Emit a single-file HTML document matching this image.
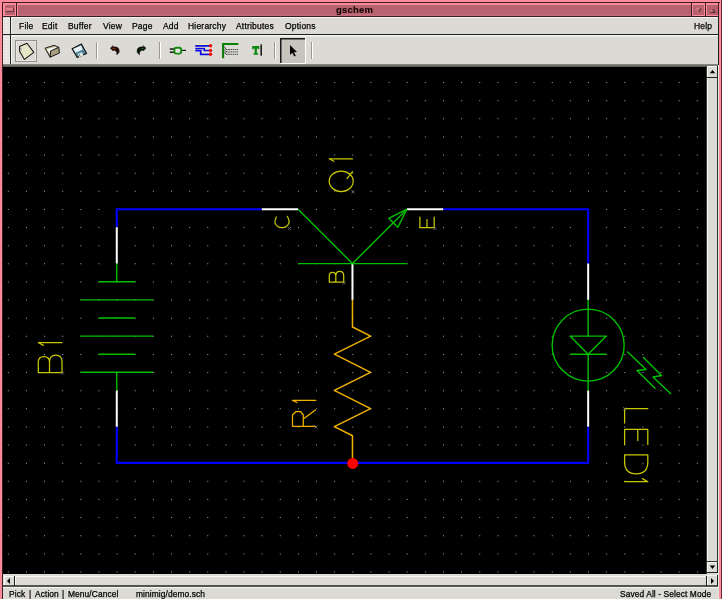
<!DOCTYPE html>
<html><head><meta charset="utf-8"><title>gschem</title><style>
*{margin:0;padding:0;box-sizing:border-box}
html,body{width:722px;height:599px;overflow:hidden;background:#ff8a9a;font-family:"Liberation Sans",sans-serif}
.a{position:absolute}
.t{position:absolute;white-space:nowrap;color:#000;font-size:8.5px;letter-spacing:0.2px;line-height:10px;will-change:transform;-webkit-text-stroke:0.25px #000}
</style></head>
<body>
<div class="a" style="left:2px;top:2px;width:718px;height:1px;background:#3c1c24;"></div><div class="a" style="left:2px;top:2px;width:1px;height:597px;background:#3c1c24;"></div><div class="a" style="left:721px;top:0px;width:1px;height:599px;background:#5c2c36;"></div><div class="a" style="left:3px;top:3px;width:716px;height:13px;background:#ff8a9a;"></div><div class="a" style="left:5px;top:5px;width:10px;height:10px;background:#b8626f;"></div><div class="a" style="left:16px;top:3px;width:1px;height:14px;background:#3c1c24;"></div><div class="a" style="left:6px;top:8px;width:7px;height:3px;background:#d47888;"></div><div class="a" style="left:6px;top:8px;width:7px;height:1px;background:#e8808f;"></div><div class="a" style="left:6px;top:11px;width:8px;height:1px;background:#6c3440;"></div><div class="a" style="left:13px;top:8px;width:1px;height:4px;background:#6c3440;"></div><div class="a" style="left:18px;top:5px;width:673px;height:10px;background:#b8626f;"></div><div class="a" style="left:18px;top:14px;width:673px;height:2px;background:#c26a7a;"></div><div class="a" style="left:3px;top:16px;width:716px;height:1px;background:#3c1c24;"></div><div class="a" style="left:691px;top:3px;width:1px;height:13px;background:#3c1c24;"></div><div class="a" style="left:693px;top:5px;width:11px;height:10px;background:#b8626f;"></div><div class="a" style="left:705px;top:3px;width:1px;height:13px;background:#3c1c24;"></div><div class="a" style="left:707px;top:5px;width:11px;height:10px;background:#b8626f;"></div><div class="a" style="left:718px;top:2px;width:1px;height:15px;background:#3c1c24;"></div><div class="t" style="left:335.5px;top:4.5px;font-weight:bold;font-size:9.5px;color:#100404;-webkit-text-stroke:0.1px #100404;transform:none">gschem</div><div class="a" style="left:3px;top:17px;width:716px;height:582px;background:#dcdad5;"></div><div class="a" style="left:718px;top:17px;width:1px;height:582px;background:#e8e8e4;"></div><div class="a" style="left:718px;top:17px;width:1px;height:48px;background:#202020;"></div><div class="a" style="left:3px;top:18px;width:7px;height:16px;background:#ecebe7;background-image:radial-gradient(circle,#bdbcb6 0.7px,transparent 0.9px);background-size:3px 3px;background-position:0.5px 0.5px"></div><div class="a" style="left:10px;top:17px;width:1px;height:18px;background:#202020;"></div><div class="a" style="left:11px;top:17px;width:707px;height:1px;background:#f4f4f0;"></div><div class="a" style="left:11px;top:17px;width:1px;height:17px;background:#f4f4f0;"></div><div class="a" style="left:3px;top:34px;width:715px;height:1px;background:#202020;"></div><div class="t" style="left:18.5px;top:21.3px;">File</div><div class="t" style="left:42px;top:21.3px;">Edit</div><div class="t" style="left:68px;top:21.3px;">Buffer</div><div class="t" style="left:102.5px;top:21.3px;">View</div><div class="t" style="left:132px;top:21.3px;">Page</div><div class="t" style="left:162.5px;top:21.3px;">Add</div><div class="t" style="left:188px;top:21.3px;">Hierarchy</div><div class="t" style="left:235.5px;top:21.3px;">Attributes</div><div class="t" style="left:284.5px;top:21.3px;">Options</div><div class="t" style="left:694px;top:21.3px;">Help</div><div class="a" style="left:3px;top:36px;width:7px;height:28px;background:#ecebe7;background-image:radial-gradient(circle,#bdbcb6 0.7px,transparent 0.9px);background-size:3px 3px;background-position:0.5px 0.5px"></div><div class="a" style="left:10px;top:35px;width:1px;height:30px;background:#202020;"></div><div class="a" style="left:11px;top:35px;width:707px;height:1px;background:#f6f6f2;"></div><div class="a" style="left:11px;top:36px;width:707px;height:1px;background:#e8e7e3;"></div><div class="a" style="left:11px;top:35px;width:1px;height:29px;background:#f4f4f0;"></div><div class="a" style="left:3px;top:64px;width:715px;height:1px;background:#86857e;"></div><div class="a" style="left:3px;top:65px;width:715px;height:1px;background:#74736c;"></div><div class="a" style="left:3px;top:66px;width:703px;height:1px;background:#5e5e58;"></div><div class="a" style="left:3px;top:67px;width:703px;height:507px;background:#000;"></div><div class="a" style="left:706px;top:66px;width:12px;height:508px;background:#dcdad5;"></div><div class="a" style="left:706px;top:66px;width:1px;height:508px;background:#3a3a36;"></div><div class="a" style="left:707px;top:66px;width:10px;height:1px;background:#f8f8f4;"></div><div class="a" style="left:707px;top:66px;width:1px;height:11px;background:#f8f8f4;"></div><div class="a" style="left:707px;top:77px;width:11px;height:1px;background:#202020;"></div><div class="a" style="left:717px;top:66px;width:1px;height:12px;background:#202020;"></div><div class="a" style="left:707px;top:78px;width:1px;height:484px;background:#f8f8f4;"></div><div class="a" style="left:717px;top:78px;width:1px;height:484px;background:#303030;"></div><div class="a" style="left:707px;top:561px;width:11px;height:1px;background:#303030;"></div><div class="a" style="left:707px;top:562px;width:10px;height:1px;background:#f8f8f4;"></div><div class="a" style="left:707px;top:562px;width:1px;height:11px;background:#f8f8f4;"></div><div class="a" style="left:707px;top:572px;width:11px;height:1px;background:#202020;"></div><div class="a" style="left:717px;top:562px;width:1px;height:11px;background:#202020;"></div><div class="a" style="left:3px;top:574px;width:715px;height:13px;background:#dcdad5;"></div><div class="a" style="left:3px;top:585px;width:715px;height:2px;background:#555550;"></div><div class="a" style="left:4px;top:576px;width:1px;height:9px;background:#f8f8f4;"></div><div class="a" style="left:4px;top:576px;width:10px;height:1px;background:#f8f8f4;"></div><div class="a" style="left:14px;top:576px;width:1px;height:10px;background:#202020;"></div><div class="a" style="left:15px;top:576px;width:1px;height:9px;background:#f8f8f4;"></div><div class="a" style="left:15px;top:576px;width:691px;height:1px;background:#f8f8f4;"></div><div class="a" style="left:706px;top:576px;width:1px;height:10px;background:#202020;"></div><div class="a" style="left:707px;top:575px;width:1px;height:10px;background:#f8f8f4;"></div><div class="a" style="left:707px;top:575px;width:10px;height:1px;background:#f8f8f4;"></div><div class="a" style="left:717px;top:575px;width:1px;height:11px;background:#202020;"></div><div class="a" style="left:3px;top:587px;width:715px;height:1px;background:#f4f4f0;"></div><div class="t" style="left:9px;top:589px;font-size:8.4px;letter-spacing:0.1px">Pick</div><div class="t" style="left:28.8px;top:589px;font-size:8.4px;letter-spacing:0.1px">|</div><div class="t" style="left:34.5px;top:589px;font-size:8.4px;letter-spacing:0.1px">Action</div><div class="t" style="left:62px;top:589px;font-size:8.4px;letter-spacing:0.1px">|</div><div class="t" style="left:68.3px;top:589px;font-size:8.4px;letter-spacing:0.1px">Menu/Cancel</div><div class="t" style="left:135.8px;top:589px;font-size:8.4px;letter-spacing:0.1px">minimig/demo.sch</div><div class="t" style="left:620.3px;top:589px;font-size:8.4px;letter-spacing:0.1px">Saved All - Select Mode</div>
<svg class="a" style="left:0;top:0" width="722" height="599" viewBox="0 0 722 599"><defs><clipPath id="cv"><rect x="3" y="67" width="703" height="507"/></clipPath></defs><g clip-path="url(#cv)"><path d="M7.8 82h1v1h-1zM7.8 100.13h1v1h-1zM7.8 118.26h1v1h-1zM7.8 136.39h1v1h-1zM7.8 154.52h1v1h-1zM7.8 172.65h1v1h-1zM7.8 190.78h1v1h-1zM7.8 208.91h1v1h-1zM7.8 227.04h1v1h-1zM7.8 245.17h1v1h-1zM7.8 263.3h1v1h-1zM7.8 281.43h1v1h-1zM7.8 299.56h1v1h-1zM7.8 317.69h1v1h-1zM7.8 335.82h1v1h-1zM7.8 353.95h1v1h-1zM7.8 372.08h1v1h-1zM7.8 390.21h1v1h-1zM7.8 408.34h1v1h-1zM7.8 426.47h1v1h-1zM7.8 444.6h1v1h-1zM7.8 462.73h1v1h-1zM7.8 480.86h1v1h-1zM7.8 498.99h1v1h-1zM7.8 517.12h1v1h-1zM7.8 535.25h1v1h-1zM7.8 553.38h1v1h-1zM7.8 571.51h1v1h-1zM25.93 82h1v1h-1zM25.93 100.13h1v1h-1zM25.93 118.26h1v1h-1zM25.93 136.39h1v1h-1zM25.93 154.52h1v1h-1zM25.93 172.65h1v1h-1zM25.93 190.78h1v1h-1zM25.93 208.91h1v1h-1zM25.93 227.04h1v1h-1zM25.93 245.17h1v1h-1zM25.93 263.3h1v1h-1zM25.93 281.43h1v1h-1zM25.93 299.56h1v1h-1zM25.93 317.69h1v1h-1zM25.93 335.82h1v1h-1zM25.93 353.95h1v1h-1zM25.93 372.08h1v1h-1zM25.93 390.21h1v1h-1zM25.93 408.34h1v1h-1zM25.93 426.47h1v1h-1zM25.93 444.6h1v1h-1zM25.93 462.73h1v1h-1zM25.93 480.86h1v1h-1zM25.93 498.99h1v1h-1zM25.93 517.12h1v1h-1zM25.93 535.25h1v1h-1zM25.93 553.38h1v1h-1zM25.93 571.51h1v1h-1zM44.06 82h1v1h-1zM44.06 100.13h1v1h-1zM44.06 118.26h1v1h-1zM44.06 136.39h1v1h-1zM44.06 154.52h1v1h-1zM44.06 172.65h1v1h-1zM44.06 190.78h1v1h-1zM44.06 208.91h1v1h-1zM44.06 227.04h1v1h-1zM44.06 245.17h1v1h-1zM44.06 263.3h1v1h-1zM44.06 281.43h1v1h-1zM44.06 299.56h1v1h-1zM44.06 317.69h1v1h-1zM44.06 335.82h1v1h-1zM44.06 353.95h1v1h-1zM44.06 372.08h1v1h-1zM44.06 390.21h1v1h-1zM44.06 408.34h1v1h-1zM44.06 426.47h1v1h-1zM44.06 444.6h1v1h-1zM44.06 462.73h1v1h-1zM44.06 480.86h1v1h-1zM44.06 498.99h1v1h-1zM44.06 517.12h1v1h-1zM44.06 535.25h1v1h-1zM44.06 553.38h1v1h-1zM44.06 571.51h1v1h-1zM62.2 82h1v1h-1zM62.2 100.13h1v1h-1zM62.2 118.26h1v1h-1zM62.2 136.39h1v1h-1zM62.2 154.52h1v1h-1zM62.2 172.65h1v1h-1zM62.2 190.78h1v1h-1zM62.2 208.91h1v1h-1zM62.2 227.04h1v1h-1zM62.2 245.17h1v1h-1zM62.2 263.3h1v1h-1zM62.2 281.43h1v1h-1zM62.2 299.56h1v1h-1zM62.2 317.69h1v1h-1zM62.2 335.82h1v1h-1zM62.2 353.95h1v1h-1zM62.2 372.08h1v1h-1zM62.2 390.21h1v1h-1zM62.2 408.34h1v1h-1zM62.2 426.47h1v1h-1zM62.2 444.6h1v1h-1zM62.2 462.73h1v1h-1zM62.2 480.86h1v1h-1zM62.2 498.99h1v1h-1zM62.2 517.12h1v1h-1zM62.2 535.25h1v1h-1zM62.2 553.38h1v1h-1zM62.2 571.51h1v1h-1zM80.33 82h1v1h-1zM80.33 100.13h1v1h-1zM80.33 118.26h1v1h-1zM80.33 136.39h1v1h-1zM80.33 154.52h1v1h-1zM80.33 172.65h1v1h-1zM80.33 190.78h1v1h-1zM80.33 208.91h1v1h-1zM80.33 227.04h1v1h-1zM80.33 245.17h1v1h-1zM80.33 263.3h1v1h-1zM80.33 281.43h1v1h-1zM80.33 299.56h1v1h-1zM80.33 317.69h1v1h-1zM80.33 335.82h1v1h-1zM80.33 353.95h1v1h-1zM80.33 372.08h1v1h-1zM80.33 390.21h1v1h-1zM80.33 408.34h1v1h-1zM80.33 426.47h1v1h-1zM80.33 444.6h1v1h-1zM80.33 462.73h1v1h-1zM80.33 480.86h1v1h-1zM80.33 498.99h1v1h-1zM80.33 517.12h1v1h-1zM80.33 535.25h1v1h-1zM80.33 553.38h1v1h-1zM80.33 571.51h1v1h-1zM98.46 82h1v1h-1zM98.46 100.13h1v1h-1zM98.46 118.26h1v1h-1zM98.46 136.39h1v1h-1zM98.46 154.52h1v1h-1zM98.46 172.65h1v1h-1zM98.46 190.78h1v1h-1zM98.46 208.91h1v1h-1zM98.46 227.04h1v1h-1zM98.46 245.17h1v1h-1zM98.46 263.3h1v1h-1zM98.46 281.43h1v1h-1zM98.46 299.56h1v1h-1zM98.46 317.69h1v1h-1zM98.46 335.82h1v1h-1zM98.46 353.95h1v1h-1zM98.46 372.08h1v1h-1zM98.46 390.21h1v1h-1zM98.46 408.34h1v1h-1zM98.46 426.47h1v1h-1zM98.46 444.6h1v1h-1zM98.46 462.73h1v1h-1zM98.46 480.86h1v1h-1zM98.46 498.99h1v1h-1zM98.46 517.12h1v1h-1zM98.46 535.25h1v1h-1zM98.46 553.38h1v1h-1zM98.46 571.51h1v1h-1zM116.59 82h1v1h-1zM116.59 100.13h1v1h-1zM116.59 118.26h1v1h-1zM116.59 136.39h1v1h-1zM116.59 154.52h1v1h-1zM116.59 172.65h1v1h-1zM116.59 190.78h1v1h-1zM116.59 208.91h1v1h-1zM116.59 227.04h1v1h-1zM116.59 245.17h1v1h-1zM116.59 263.3h1v1h-1zM116.59 281.43h1v1h-1zM116.59 299.56h1v1h-1zM116.59 317.69h1v1h-1zM116.59 335.82h1v1h-1zM116.59 353.95h1v1h-1zM116.59 372.08h1v1h-1zM116.59 390.21h1v1h-1zM116.59 408.34h1v1h-1zM116.59 426.47h1v1h-1zM116.59 444.6h1v1h-1zM116.59 462.73h1v1h-1zM116.59 480.86h1v1h-1zM116.59 498.99h1v1h-1zM116.59 517.12h1v1h-1zM116.59 535.25h1v1h-1zM116.59 553.38h1v1h-1zM116.59 571.51h1v1h-1zM134.72 82h1v1h-1zM134.72 100.13h1v1h-1zM134.72 118.26h1v1h-1zM134.72 136.39h1v1h-1zM134.72 154.52h1v1h-1zM134.72 172.65h1v1h-1zM134.72 190.78h1v1h-1zM134.72 208.91h1v1h-1zM134.72 227.04h1v1h-1zM134.72 245.17h1v1h-1zM134.72 263.3h1v1h-1zM134.72 281.43h1v1h-1zM134.72 299.56h1v1h-1zM134.72 317.69h1v1h-1zM134.72 335.82h1v1h-1zM134.72 353.95h1v1h-1zM134.72 372.08h1v1h-1zM134.72 390.21h1v1h-1zM134.72 408.34h1v1h-1zM134.72 426.47h1v1h-1zM134.72 444.6h1v1h-1zM134.72 462.73h1v1h-1zM134.72 480.86h1v1h-1zM134.72 498.99h1v1h-1zM134.72 517.12h1v1h-1zM134.72 535.25h1v1h-1zM134.72 553.38h1v1h-1zM134.72 571.51h1v1h-1zM152.86 82h1v1h-1zM152.86 100.13h1v1h-1zM152.86 118.26h1v1h-1zM152.86 136.39h1v1h-1zM152.86 154.52h1v1h-1zM152.86 172.65h1v1h-1zM152.86 190.78h1v1h-1zM152.86 208.91h1v1h-1zM152.86 227.04h1v1h-1zM152.86 245.17h1v1h-1zM152.86 263.3h1v1h-1zM152.86 281.43h1v1h-1zM152.86 299.56h1v1h-1zM152.86 317.69h1v1h-1zM152.86 335.82h1v1h-1zM152.86 353.95h1v1h-1zM152.86 372.08h1v1h-1zM152.86 390.21h1v1h-1zM152.86 408.34h1v1h-1zM152.86 426.47h1v1h-1zM152.86 444.6h1v1h-1zM152.86 462.73h1v1h-1zM152.86 480.86h1v1h-1zM152.86 498.99h1v1h-1zM152.86 517.12h1v1h-1zM152.86 535.25h1v1h-1zM152.86 553.38h1v1h-1zM152.86 571.51h1v1h-1zM170.99 82h1v1h-1zM170.99 100.13h1v1h-1zM170.99 118.26h1v1h-1zM170.99 136.39h1v1h-1zM170.99 154.52h1v1h-1zM170.99 172.65h1v1h-1zM170.99 190.78h1v1h-1zM170.99 208.91h1v1h-1zM170.99 227.04h1v1h-1zM170.99 245.17h1v1h-1zM170.99 263.3h1v1h-1zM170.99 281.43h1v1h-1zM170.99 299.56h1v1h-1zM170.99 317.69h1v1h-1zM170.99 335.82h1v1h-1zM170.99 353.95h1v1h-1zM170.99 372.08h1v1h-1zM170.99 390.21h1v1h-1zM170.99 408.34h1v1h-1zM170.99 426.47h1v1h-1zM170.99 444.6h1v1h-1zM170.99 462.73h1v1h-1zM170.99 480.86h1v1h-1zM170.99 498.99h1v1h-1zM170.99 517.12h1v1h-1zM170.99 535.25h1v1h-1zM170.99 553.38h1v1h-1zM170.99 571.51h1v1h-1zM189.12 82h1v1h-1zM189.12 100.13h1v1h-1zM189.12 118.26h1v1h-1zM189.12 136.39h1v1h-1zM189.12 154.52h1v1h-1zM189.12 172.65h1v1h-1zM189.12 190.78h1v1h-1zM189.12 208.91h1v1h-1zM189.12 227.04h1v1h-1zM189.12 245.17h1v1h-1zM189.12 263.3h1v1h-1zM189.12 281.43h1v1h-1zM189.12 299.56h1v1h-1zM189.12 317.69h1v1h-1zM189.12 335.82h1v1h-1zM189.12 353.95h1v1h-1zM189.12 372.08h1v1h-1zM189.12 390.21h1v1h-1zM189.12 408.34h1v1h-1zM189.12 426.47h1v1h-1zM189.12 444.6h1v1h-1zM189.12 462.73h1v1h-1zM189.12 480.86h1v1h-1zM189.12 498.99h1v1h-1zM189.12 517.12h1v1h-1zM189.12 535.25h1v1h-1zM189.12 553.38h1v1h-1zM189.12 571.51h1v1h-1zM207.25 82h1v1h-1zM207.25 100.13h1v1h-1zM207.25 118.26h1v1h-1zM207.25 136.39h1v1h-1zM207.25 154.52h1v1h-1zM207.25 172.65h1v1h-1zM207.25 190.78h1v1h-1zM207.25 208.91h1v1h-1zM207.25 227.04h1v1h-1zM207.25 245.17h1v1h-1zM207.25 263.3h1v1h-1zM207.25 281.43h1v1h-1zM207.25 299.56h1v1h-1zM207.25 317.69h1v1h-1zM207.25 335.82h1v1h-1zM207.25 353.95h1v1h-1zM207.25 372.08h1v1h-1zM207.25 390.21h1v1h-1zM207.25 408.34h1v1h-1zM207.25 426.47h1v1h-1zM207.25 444.6h1v1h-1zM207.25 462.73h1v1h-1zM207.25 480.86h1v1h-1zM207.25 498.99h1v1h-1zM207.25 517.12h1v1h-1zM207.25 535.25h1v1h-1zM207.25 553.38h1v1h-1zM207.25 571.51h1v1h-1zM225.38 82h1v1h-1zM225.38 100.13h1v1h-1zM225.38 118.26h1v1h-1zM225.38 136.39h1v1h-1zM225.38 154.52h1v1h-1zM225.38 172.65h1v1h-1zM225.38 190.78h1v1h-1zM225.38 208.91h1v1h-1zM225.38 227.04h1v1h-1zM225.38 245.17h1v1h-1zM225.38 263.3h1v1h-1zM225.38 281.43h1v1h-1zM225.38 299.56h1v1h-1zM225.38 317.69h1v1h-1zM225.38 335.82h1v1h-1zM225.38 353.95h1v1h-1zM225.38 372.08h1v1h-1zM225.38 390.21h1v1h-1zM225.38 408.34h1v1h-1zM225.38 426.47h1v1h-1zM225.38 444.6h1v1h-1zM225.38 462.73h1v1h-1zM225.38 480.86h1v1h-1zM225.38 498.99h1v1h-1zM225.38 517.12h1v1h-1zM225.38 535.25h1v1h-1zM225.38 553.38h1v1h-1zM225.38 571.51h1v1h-1zM243.52 82h1v1h-1zM243.52 100.13h1v1h-1zM243.52 118.26h1v1h-1zM243.52 136.39h1v1h-1zM243.52 154.52h1v1h-1zM243.52 172.65h1v1h-1zM243.52 190.78h1v1h-1zM243.52 208.91h1v1h-1zM243.52 227.04h1v1h-1zM243.52 245.17h1v1h-1zM243.52 263.3h1v1h-1zM243.52 281.43h1v1h-1zM243.52 299.56h1v1h-1zM243.52 317.69h1v1h-1zM243.52 335.82h1v1h-1zM243.52 353.95h1v1h-1zM243.52 372.08h1v1h-1zM243.52 390.21h1v1h-1zM243.52 408.34h1v1h-1zM243.52 426.47h1v1h-1zM243.52 444.6h1v1h-1zM243.52 462.73h1v1h-1zM243.52 480.86h1v1h-1zM243.52 498.99h1v1h-1zM243.52 517.12h1v1h-1zM243.52 535.25h1v1h-1zM243.52 553.38h1v1h-1zM243.52 571.51h1v1h-1zM261.65 82h1v1h-1zM261.65 100.13h1v1h-1zM261.65 118.26h1v1h-1zM261.65 136.39h1v1h-1zM261.65 154.52h1v1h-1zM261.65 172.65h1v1h-1zM261.65 190.78h1v1h-1zM261.65 208.91h1v1h-1zM261.65 227.04h1v1h-1zM261.65 245.17h1v1h-1zM261.65 263.3h1v1h-1zM261.65 281.43h1v1h-1zM261.65 299.56h1v1h-1zM261.65 317.69h1v1h-1zM261.65 335.82h1v1h-1zM261.65 353.95h1v1h-1zM261.65 372.08h1v1h-1zM261.65 390.21h1v1h-1zM261.65 408.34h1v1h-1zM261.65 426.47h1v1h-1zM261.65 444.6h1v1h-1zM261.65 462.73h1v1h-1zM261.65 480.86h1v1h-1zM261.65 498.99h1v1h-1zM261.65 517.12h1v1h-1zM261.65 535.25h1v1h-1zM261.65 553.38h1v1h-1zM261.65 571.51h1v1h-1zM279.78 82h1v1h-1zM279.78 100.13h1v1h-1zM279.78 118.26h1v1h-1zM279.78 136.39h1v1h-1zM279.78 154.52h1v1h-1zM279.78 172.65h1v1h-1zM279.78 190.78h1v1h-1zM279.78 208.91h1v1h-1zM279.78 227.04h1v1h-1zM279.78 245.17h1v1h-1zM279.78 263.3h1v1h-1zM279.78 281.43h1v1h-1zM279.78 299.56h1v1h-1zM279.78 317.69h1v1h-1zM279.78 335.82h1v1h-1zM279.78 353.95h1v1h-1zM279.78 372.08h1v1h-1zM279.78 390.21h1v1h-1zM279.78 408.34h1v1h-1zM279.78 426.47h1v1h-1zM279.78 444.6h1v1h-1zM279.78 462.73h1v1h-1zM279.78 480.86h1v1h-1zM279.78 498.99h1v1h-1zM279.78 517.12h1v1h-1zM279.78 535.25h1v1h-1zM279.78 553.38h1v1h-1zM279.78 571.51h1v1h-1zM297.91 82h1v1h-1zM297.91 100.13h1v1h-1zM297.91 118.26h1v1h-1zM297.91 136.39h1v1h-1zM297.91 154.52h1v1h-1zM297.91 172.65h1v1h-1zM297.91 190.78h1v1h-1zM297.91 208.91h1v1h-1zM297.91 227.04h1v1h-1zM297.91 245.17h1v1h-1zM297.91 263.3h1v1h-1zM297.91 281.43h1v1h-1zM297.91 299.56h1v1h-1zM297.91 317.69h1v1h-1zM297.91 335.82h1v1h-1zM297.91 353.95h1v1h-1zM297.91 372.08h1v1h-1zM297.91 390.21h1v1h-1zM297.91 408.34h1v1h-1zM297.91 426.47h1v1h-1zM297.91 444.6h1v1h-1zM297.91 462.73h1v1h-1zM297.91 480.86h1v1h-1zM297.91 498.99h1v1h-1zM297.91 517.12h1v1h-1zM297.91 535.25h1v1h-1zM297.91 553.38h1v1h-1zM297.91 571.51h1v1h-1zM316.04 82h1v1h-1zM316.04 100.13h1v1h-1zM316.04 118.26h1v1h-1zM316.04 136.39h1v1h-1zM316.04 154.52h1v1h-1zM316.04 172.65h1v1h-1zM316.04 190.78h1v1h-1zM316.04 208.91h1v1h-1zM316.04 227.04h1v1h-1zM316.04 245.17h1v1h-1zM316.04 263.3h1v1h-1zM316.04 281.43h1v1h-1zM316.04 299.56h1v1h-1zM316.04 317.69h1v1h-1zM316.04 335.82h1v1h-1zM316.04 353.95h1v1h-1zM316.04 372.08h1v1h-1zM316.04 390.21h1v1h-1zM316.04 408.34h1v1h-1zM316.04 426.47h1v1h-1zM316.04 444.6h1v1h-1zM316.04 462.73h1v1h-1zM316.04 480.86h1v1h-1zM316.04 498.99h1v1h-1zM316.04 517.12h1v1h-1zM316.04 535.25h1v1h-1zM316.04 553.38h1v1h-1zM316.04 571.51h1v1h-1zM334.18 82h1v1h-1zM334.18 100.13h1v1h-1zM334.18 118.26h1v1h-1zM334.18 136.39h1v1h-1zM334.18 154.52h1v1h-1zM334.18 172.65h1v1h-1zM334.18 190.78h1v1h-1zM334.18 208.91h1v1h-1zM334.18 227.04h1v1h-1zM334.18 245.17h1v1h-1zM334.18 263.3h1v1h-1zM334.18 281.43h1v1h-1zM334.18 299.56h1v1h-1zM334.18 317.69h1v1h-1zM334.18 335.82h1v1h-1zM334.18 353.95h1v1h-1zM334.18 372.08h1v1h-1zM334.18 390.21h1v1h-1zM334.18 408.34h1v1h-1zM334.18 426.47h1v1h-1zM334.18 444.6h1v1h-1zM334.18 462.73h1v1h-1zM334.18 480.86h1v1h-1zM334.18 498.99h1v1h-1zM334.18 517.12h1v1h-1zM334.18 535.25h1v1h-1zM334.18 553.38h1v1h-1zM334.18 571.51h1v1h-1zM352.31 82h1v1h-1zM352.31 100.13h1v1h-1zM352.31 118.26h1v1h-1zM352.31 136.39h1v1h-1zM352.31 154.52h1v1h-1zM352.31 172.65h1v1h-1zM352.31 190.78h1v1h-1zM352.31 208.91h1v1h-1zM352.31 227.04h1v1h-1zM352.31 245.17h1v1h-1zM352.31 263.3h1v1h-1zM352.31 281.43h1v1h-1zM352.31 299.56h1v1h-1zM352.31 317.69h1v1h-1zM352.31 335.82h1v1h-1zM352.31 353.95h1v1h-1zM352.31 372.08h1v1h-1zM352.31 390.21h1v1h-1zM352.31 408.34h1v1h-1zM352.31 426.47h1v1h-1zM352.31 444.6h1v1h-1zM352.31 462.73h1v1h-1zM352.31 480.86h1v1h-1zM352.31 498.99h1v1h-1zM352.31 517.12h1v1h-1zM352.31 535.25h1v1h-1zM352.31 553.38h1v1h-1zM352.31 571.51h1v1h-1zM370.44 82h1v1h-1zM370.44 100.13h1v1h-1zM370.44 118.26h1v1h-1zM370.44 136.39h1v1h-1zM370.44 154.52h1v1h-1zM370.44 172.65h1v1h-1zM370.44 190.78h1v1h-1zM370.44 208.91h1v1h-1zM370.44 227.04h1v1h-1zM370.44 245.17h1v1h-1zM370.44 263.3h1v1h-1zM370.44 281.43h1v1h-1zM370.44 299.56h1v1h-1zM370.44 317.69h1v1h-1zM370.44 335.82h1v1h-1zM370.44 353.95h1v1h-1zM370.44 372.08h1v1h-1zM370.44 390.21h1v1h-1zM370.44 408.34h1v1h-1zM370.44 426.47h1v1h-1zM370.44 444.6h1v1h-1zM370.44 462.73h1v1h-1zM370.44 480.86h1v1h-1zM370.44 498.99h1v1h-1zM370.44 517.12h1v1h-1zM370.44 535.25h1v1h-1zM370.44 553.38h1v1h-1zM370.44 571.51h1v1h-1zM388.57 82h1v1h-1zM388.57 100.13h1v1h-1zM388.57 118.26h1v1h-1zM388.57 136.39h1v1h-1zM388.57 154.52h1v1h-1zM388.57 172.65h1v1h-1zM388.57 190.78h1v1h-1zM388.57 208.91h1v1h-1zM388.57 227.04h1v1h-1zM388.57 245.17h1v1h-1zM388.57 263.3h1v1h-1zM388.57 281.43h1v1h-1zM388.57 299.56h1v1h-1zM388.57 317.69h1v1h-1zM388.57 335.82h1v1h-1zM388.57 353.95h1v1h-1zM388.57 372.08h1v1h-1zM388.57 390.21h1v1h-1zM388.57 408.34h1v1h-1zM388.57 426.47h1v1h-1zM388.57 444.6h1v1h-1zM388.57 462.73h1v1h-1zM388.57 480.86h1v1h-1zM388.57 498.99h1v1h-1zM388.57 517.12h1v1h-1zM388.57 535.25h1v1h-1zM388.57 553.38h1v1h-1zM388.57 571.51h1v1h-1zM406.7 82h1v1h-1zM406.7 100.13h1v1h-1zM406.7 118.26h1v1h-1zM406.7 136.39h1v1h-1zM406.7 154.52h1v1h-1zM406.7 172.65h1v1h-1zM406.7 190.78h1v1h-1zM406.7 208.91h1v1h-1zM406.7 227.04h1v1h-1zM406.7 245.17h1v1h-1zM406.7 263.3h1v1h-1zM406.7 281.43h1v1h-1zM406.7 299.56h1v1h-1zM406.7 317.69h1v1h-1zM406.7 335.82h1v1h-1zM406.7 353.95h1v1h-1zM406.7 372.08h1v1h-1zM406.7 390.21h1v1h-1zM406.7 408.34h1v1h-1zM406.7 426.47h1v1h-1zM406.7 444.6h1v1h-1zM406.7 462.73h1v1h-1zM406.7 480.86h1v1h-1zM406.7 498.99h1v1h-1zM406.7 517.12h1v1h-1zM406.7 535.25h1v1h-1zM406.7 553.38h1v1h-1zM406.7 571.51h1v1h-1zM424.84 82h1v1h-1zM424.84 100.13h1v1h-1zM424.84 118.26h1v1h-1zM424.84 136.39h1v1h-1zM424.84 154.52h1v1h-1zM424.84 172.65h1v1h-1zM424.84 190.78h1v1h-1zM424.84 208.91h1v1h-1zM424.84 227.04h1v1h-1zM424.84 245.17h1v1h-1zM424.84 263.3h1v1h-1zM424.84 281.43h1v1h-1zM424.84 299.56h1v1h-1zM424.84 317.69h1v1h-1zM424.84 335.82h1v1h-1zM424.84 353.95h1v1h-1zM424.84 372.08h1v1h-1zM424.84 390.21h1v1h-1zM424.84 408.34h1v1h-1zM424.84 426.47h1v1h-1zM424.84 444.6h1v1h-1zM424.84 462.73h1v1h-1zM424.84 480.86h1v1h-1zM424.84 498.99h1v1h-1zM424.84 517.12h1v1h-1zM424.84 535.25h1v1h-1zM424.84 553.38h1v1h-1zM424.84 571.51h1v1h-1zM442.97 82h1v1h-1zM442.97 100.13h1v1h-1zM442.97 118.26h1v1h-1zM442.97 136.39h1v1h-1zM442.97 154.52h1v1h-1zM442.97 172.65h1v1h-1zM442.97 190.78h1v1h-1zM442.97 208.91h1v1h-1zM442.97 227.04h1v1h-1zM442.97 245.17h1v1h-1zM442.97 263.3h1v1h-1zM442.97 281.43h1v1h-1zM442.97 299.56h1v1h-1zM442.97 317.69h1v1h-1zM442.97 335.82h1v1h-1zM442.97 353.95h1v1h-1zM442.97 372.08h1v1h-1zM442.97 390.21h1v1h-1zM442.97 408.34h1v1h-1zM442.97 426.47h1v1h-1zM442.97 444.6h1v1h-1zM442.97 462.73h1v1h-1zM442.97 480.86h1v1h-1zM442.97 498.99h1v1h-1zM442.97 517.12h1v1h-1zM442.97 535.25h1v1h-1zM442.97 553.38h1v1h-1zM442.97 571.51h1v1h-1zM461.1 82h1v1h-1zM461.1 100.13h1v1h-1zM461.1 118.26h1v1h-1zM461.1 136.39h1v1h-1zM461.1 154.52h1v1h-1zM461.1 172.65h1v1h-1zM461.1 190.78h1v1h-1zM461.1 208.91h1v1h-1zM461.1 227.04h1v1h-1zM461.1 245.17h1v1h-1zM461.1 263.3h1v1h-1zM461.1 281.43h1v1h-1zM461.1 299.56h1v1h-1zM461.1 317.69h1v1h-1zM461.1 335.82h1v1h-1zM461.1 353.95h1v1h-1zM461.1 372.08h1v1h-1zM461.1 390.21h1v1h-1zM461.1 408.34h1v1h-1zM461.1 426.47h1v1h-1zM461.1 444.6h1v1h-1zM461.1 462.73h1v1h-1zM461.1 480.86h1v1h-1zM461.1 498.99h1v1h-1zM461.1 517.12h1v1h-1zM461.1 535.25h1v1h-1zM461.1 553.38h1v1h-1zM461.1 571.51h1v1h-1zM479.23 82h1v1h-1zM479.23 100.13h1v1h-1zM479.23 118.26h1v1h-1zM479.23 136.39h1v1h-1zM479.23 154.52h1v1h-1zM479.23 172.65h1v1h-1zM479.23 190.78h1v1h-1zM479.23 208.91h1v1h-1zM479.23 227.04h1v1h-1zM479.23 245.17h1v1h-1zM479.23 263.3h1v1h-1zM479.23 281.43h1v1h-1zM479.23 299.56h1v1h-1zM479.23 317.69h1v1h-1zM479.23 335.82h1v1h-1zM479.23 353.95h1v1h-1zM479.23 372.08h1v1h-1zM479.23 390.21h1v1h-1zM479.23 408.34h1v1h-1zM479.23 426.47h1v1h-1zM479.23 444.6h1v1h-1zM479.23 462.73h1v1h-1zM479.23 480.86h1v1h-1zM479.23 498.99h1v1h-1zM479.23 517.12h1v1h-1zM479.23 535.25h1v1h-1zM479.23 553.38h1v1h-1zM479.23 571.51h1v1h-1zM497.36 82h1v1h-1zM497.36 100.13h1v1h-1zM497.36 118.26h1v1h-1zM497.36 136.39h1v1h-1zM497.36 154.52h1v1h-1zM497.36 172.65h1v1h-1zM497.36 190.78h1v1h-1zM497.36 208.91h1v1h-1zM497.36 227.04h1v1h-1zM497.36 245.17h1v1h-1zM497.36 263.3h1v1h-1zM497.36 281.43h1v1h-1zM497.36 299.56h1v1h-1zM497.36 317.69h1v1h-1zM497.36 335.82h1v1h-1zM497.36 353.95h1v1h-1zM497.36 372.08h1v1h-1zM497.36 390.21h1v1h-1zM497.36 408.34h1v1h-1zM497.36 426.47h1v1h-1zM497.36 444.6h1v1h-1zM497.36 462.73h1v1h-1zM497.36 480.86h1v1h-1zM497.36 498.99h1v1h-1zM497.36 517.12h1v1h-1zM497.36 535.25h1v1h-1zM497.36 553.38h1v1h-1zM497.36 571.51h1v1h-1zM515.5 82h1v1h-1zM515.5 100.13h1v1h-1zM515.5 118.26h1v1h-1zM515.5 136.39h1v1h-1zM515.5 154.52h1v1h-1zM515.5 172.65h1v1h-1zM515.5 190.78h1v1h-1zM515.5 208.91h1v1h-1zM515.5 227.04h1v1h-1zM515.5 245.17h1v1h-1zM515.5 263.3h1v1h-1zM515.5 281.43h1v1h-1zM515.5 299.56h1v1h-1zM515.5 317.69h1v1h-1zM515.5 335.82h1v1h-1zM515.5 353.95h1v1h-1zM515.5 372.08h1v1h-1zM515.5 390.21h1v1h-1zM515.5 408.34h1v1h-1zM515.5 426.47h1v1h-1zM515.5 444.6h1v1h-1zM515.5 462.73h1v1h-1zM515.5 480.86h1v1h-1zM515.5 498.99h1v1h-1zM515.5 517.12h1v1h-1zM515.5 535.25h1v1h-1zM515.5 553.38h1v1h-1zM515.5 571.51h1v1h-1zM533.63 82h1v1h-1zM533.63 100.13h1v1h-1zM533.63 118.26h1v1h-1zM533.63 136.39h1v1h-1zM533.63 154.52h1v1h-1zM533.63 172.65h1v1h-1zM533.63 190.78h1v1h-1zM533.63 208.91h1v1h-1zM533.63 227.04h1v1h-1zM533.63 245.17h1v1h-1zM533.63 263.3h1v1h-1zM533.63 281.43h1v1h-1zM533.63 299.56h1v1h-1zM533.63 317.69h1v1h-1zM533.63 335.82h1v1h-1zM533.63 353.95h1v1h-1zM533.63 372.08h1v1h-1zM533.63 390.21h1v1h-1zM533.63 408.34h1v1h-1zM533.63 426.47h1v1h-1zM533.63 444.6h1v1h-1zM533.63 462.73h1v1h-1zM533.63 480.86h1v1h-1zM533.63 498.99h1v1h-1zM533.63 517.12h1v1h-1zM533.63 535.25h1v1h-1zM533.63 553.38h1v1h-1zM533.63 571.51h1v1h-1zM551.76 82h1v1h-1zM551.76 100.13h1v1h-1zM551.76 118.26h1v1h-1zM551.76 136.39h1v1h-1zM551.76 154.52h1v1h-1zM551.76 172.65h1v1h-1zM551.76 190.78h1v1h-1zM551.76 208.91h1v1h-1zM551.76 227.04h1v1h-1zM551.76 245.17h1v1h-1zM551.76 263.3h1v1h-1zM551.76 281.43h1v1h-1zM551.76 299.56h1v1h-1zM551.76 317.69h1v1h-1zM551.76 335.82h1v1h-1zM551.76 353.95h1v1h-1zM551.76 372.08h1v1h-1zM551.76 390.21h1v1h-1zM551.76 408.34h1v1h-1zM551.76 426.47h1v1h-1zM551.76 444.6h1v1h-1zM551.76 462.73h1v1h-1zM551.76 480.86h1v1h-1zM551.76 498.99h1v1h-1zM551.76 517.12h1v1h-1zM551.76 535.25h1v1h-1zM551.76 553.38h1v1h-1zM551.76 571.51h1v1h-1zM569.89 82h1v1h-1zM569.89 100.13h1v1h-1zM569.89 118.26h1v1h-1zM569.89 136.39h1v1h-1zM569.89 154.52h1v1h-1zM569.89 172.65h1v1h-1zM569.89 190.78h1v1h-1zM569.89 208.91h1v1h-1zM569.89 227.04h1v1h-1zM569.89 245.17h1v1h-1zM569.89 263.3h1v1h-1zM569.89 281.43h1v1h-1zM569.89 299.56h1v1h-1zM569.89 317.69h1v1h-1zM569.89 335.82h1v1h-1zM569.89 353.95h1v1h-1zM569.89 372.08h1v1h-1zM569.89 390.21h1v1h-1zM569.89 408.34h1v1h-1zM569.89 426.47h1v1h-1zM569.89 444.6h1v1h-1zM569.89 462.73h1v1h-1zM569.89 480.86h1v1h-1zM569.89 498.99h1v1h-1zM569.89 517.12h1v1h-1zM569.89 535.25h1v1h-1zM569.89 553.38h1v1h-1zM569.89 571.51h1v1h-1zM588.02 82h1v1h-1zM588.02 100.13h1v1h-1zM588.02 118.26h1v1h-1zM588.02 136.39h1v1h-1zM588.02 154.52h1v1h-1zM588.02 172.65h1v1h-1zM588.02 190.78h1v1h-1zM588.02 208.91h1v1h-1zM588.02 227.04h1v1h-1zM588.02 245.17h1v1h-1zM588.02 263.3h1v1h-1zM588.02 281.43h1v1h-1zM588.02 299.56h1v1h-1zM588.02 317.69h1v1h-1zM588.02 335.82h1v1h-1zM588.02 353.95h1v1h-1zM588.02 372.08h1v1h-1zM588.02 390.21h1v1h-1zM588.02 408.34h1v1h-1zM588.02 426.47h1v1h-1zM588.02 444.6h1v1h-1zM588.02 462.73h1v1h-1zM588.02 480.86h1v1h-1zM588.02 498.99h1v1h-1zM588.02 517.12h1v1h-1zM588.02 535.25h1v1h-1zM588.02 553.38h1v1h-1zM588.02 571.51h1v1h-1zM606.16 82h1v1h-1zM606.16 100.13h1v1h-1zM606.16 118.26h1v1h-1zM606.16 136.39h1v1h-1zM606.16 154.52h1v1h-1zM606.16 172.65h1v1h-1zM606.16 190.78h1v1h-1zM606.16 208.91h1v1h-1zM606.16 227.04h1v1h-1zM606.16 245.17h1v1h-1zM606.16 263.3h1v1h-1zM606.16 281.43h1v1h-1zM606.16 299.56h1v1h-1zM606.16 317.69h1v1h-1zM606.16 335.82h1v1h-1zM606.16 353.95h1v1h-1zM606.16 372.08h1v1h-1zM606.16 390.21h1v1h-1zM606.16 408.34h1v1h-1zM606.16 426.47h1v1h-1zM606.16 444.6h1v1h-1zM606.16 462.73h1v1h-1zM606.16 480.86h1v1h-1zM606.16 498.99h1v1h-1zM606.16 517.12h1v1h-1zM606.16 535.25h1v1h-1zM606.16 553.38h1v1h-1zM606.16 571.51h1v1h-1zM624.29 82h1v1h-1zM624.29 100.13h1v1h-1zM624.29 118.26h1v1h-1zM624.29 136.39h1v1h-1zM624.29 154.52h1v1h-1zM624.29 172.65h1v1h-1zM624.29 190.78h1v1h-1zM624.29 208.91h1v1h-1zM624.29 227.04h1v1h-1zM624.29 245.17h1v1h-1zM624.29 263.3h1v1h-1zM624.29 281.43h1v1h-1zM624.29 299.56h1v1h-1zM624.29 317.69h1v1h-1zM624.29 335.82h1v1h-1zM624.29 353.95h1v1h-1zM624.29 372.08h1v1h-1zM624.29 390.21h1v1h-1zM624.29 408.34h1v1h-1zM624.29 426.47h1v1h-1zM624.29 444.6h1v1h-1zM624.29 462.73h1v1h-1zM624.29 480.86h1v1h-1zM624.29 498.99h1v1h-1zM624.29 517.12h1v1h-1zM624.29 535.25h1v1h-1zM624.29 553.38h1v1h-1zM624.29 571.51h1v1h-1zM642.42 82h1v1h-1zM642.42 100.13h1v1h-1zM642.42 118.26h1v1h-1zM642.42 136.39h1v1h-1zM642.42 154.52h1v1h-1zM642.42 172.65h1v1h-1zM642.42 190.78h1v1h-1zM642.42 208.91h1v1h-1zM642.42 227.04h1v1h-1zM642.42 245.17h1v1h-1zM642.42 263.3h1v1h-1zM642.42 281.43h1v1h-1zM642.42 299.56h1v1h-1zM642.42 317.69h1v1h-1zM642.42 335.82h1v1h-1zM642.42 353.95h1v1h-1zM642.42 372.08h1v1h-1zM642.42 390.21h1v1h-1zM642.42 408.34h1v1h-1zM642.42 426.47h1v1h-1zM642.42 444.6h1v1h-1zM642.42 462.73h1v1h-1zM642.42 480.86h1v1h-1zM642.42 498.99h1v1h-1zM642.42 517.12h1v1h-1zM642.42 535.25h1v1h-1zM642.42 553.38h1v1h-1zM642.42 571.51h1v1h-1zM660.55 82h1v1h-1zM660.55 100.13h1v1h-1zM660.55 118.26h1v1h-1zM660.55 136.39h1v1h-1zM660.55 154.52h1v1h-1zM660.55 172.65h1v1h-1zM660.55 190.78h1v1h-1zM660.55 208.91h1v1h-1zM660.55 227.04h1v1h-1zM660.55 245.17h1v1h-1zM660.55 263.3h1v1h-1zM660.55 281.43h1v1h-1zM660.55 299.56h1v1h-1zM660.55 317.69h1v1h-1zM660.55 335.82h1v1h-1zM660.55 353.95h1v1h-1zM660.55 372.08h1v1h-1zM660.55 390.21h1v1h-1zM660.55 408.34h1v1h-1zM660.55 426.47h1v1h-1zM660.55 444.6h1v1h-1zM660.55 462.73h1v1h-1zM660.55 480.86h1v1h-1zM660.55 498.99h1v1h-1zM660.55 517.12h1v1h-1zM660.55 535.25h1v1h-1zM660.55 553.38h1v1h-1zM660.55 571.51h1v1h-1zM678.68 82h1v1h-1zM678.68 100.13h1v1h-1zM678.68 118.26h1v1h-1zM678.68 136.39h1v1h-1zM678.68 154.52h1v1h-1zM678.68 172.65h1v1h-1zM678.68 190.78h1v1h-1zM678.68 208.91h1v1h-1zM678.68 227.04h1v1h-1zM678.68 245.17h1v1h-1zM678.68 263.3h1v1h-1zM678.68 281.43h1v1h-1zM678.68 299.56h1v1h-1zM678.68 317.69h1v1h-1zM678.68 335.82h1v1h-1zM678.68 353.95h1v1h-1zM678.68 372.08h1v1h-1zM678.68 390.21h1v1h-1zM678.68 408.34h1v1h-1zM678.68 426.47h1v1h-1zM678.68 444.6h1v1h-1zM678.68 462.73h1v1h-1zM678.68 480.86h1v1h-1zM678.68 498.99h1v1h-1zM678.68 517.12h1v1h-1zM678.68 535.25h1v1h-1zM678.68 553.38h1v1h-1zM678.68 571.51h1v1h-1zM696.82 82h1v1h-1zM696.82 100.13h1v1h-1zM696.82 118.26h1v1h-1zM696.82 136.39h1v1h-1zM696.82 154.52h1v1h-1zM696.82 172.65h1v1h-1zM696.82 190.78h1v1h-1zM696.82 208.91h1v1h-1zM696.82 227.04h1v1h-1zM696.82 245.17h1v1h-1zM696.82 263.3h1v1h-1zM696.82 281.43h1v1h-1zM696.82 299.56h1v1h-1zM696.82 317.69h1v1h-1zM696.82 335.82h1v1h-1zM696.82 353.95h1v1h-1zM696.82 372.08h1v1h-1zM696.82 390.21h1v1h-1zM696.82 408.34h1v1h-1zM696.82 426.47h1v1h-1zM696.82 444.6h1v1h-1zM696.82 462.73h1v1h-1zM696.82 480.86h1v1h-1zM696.82 498.99h1v1h-1zM696.82 517.12h1v1h-1zM696.82 535.25h1v1h-1zM696.82 553.38h1v1h-1zM696.82 571.51h1v1h-1z" fill="#a8a8a8"/><path d="M261.82 209.24 L116.78 209.24 L116.78 227.36" fill="none" stroke="#0000ff" stroke-width="2.1" stroke-linejoin="round" stroke-linecap="butt" /><path d="M443.12 209.24 L588.16 209.24 L588.16 263.6" fill="none" stroke="#0000ff" stroke-width="2.1" stroke-linejoin="round" stroke-linecap="butt" /><path d="M116.78 426.68 L116.78 462.92 L588.16 462.92 L588.16 426.68" fill="none" stroke="#0000ff" stroke-width="2.1" stroke-linejoin="round" stroke-linecap="butt" /><path d="M116.78 227.36 L116.78 263.6" fill="none" stroke="#ffffff" stroke-width="2" stroke-linejoin="round" stroke-linecap="butt" /><path d="M116.78 390.44 L116.78 426.68" fill="none" stroke="#ffffff" stroke-width="2" stroke-linejoin="round" stroke-linecap="butt" /><path d="M261.82 209.24 L298.08 209.24" fill="none" stroke="#ffffff" stroke-width="2" stroke-linejoin="round" stroke-linecap="butt" /><path d="M406.86 209.24 L443.12 209.24" fill="none" stroke="#ffffff" stroke-width="2" stroke-linejoin="round" stroke-linecap="butt" /><path d="M352.47 263.6 L352.47 299.84" fill="none" stroke="#ffffff" stroke-width="2" stroke-linejoin="round" stroke-linecap="butt" /><path d="M588.16 263.6 L588.16 299.84" fill="none" stroke="#ffffff" stroke-width="2" stroke-linejoin="round" stroke-linecap="butt" /><path d="M588.16 390.44 L588.16 426.68" fill="none" stroke="#ffffff" stroke-width="2" stroke-linejoin="round" stroke-linecap="butt" /><path d="M116.78 263.6 L116.78 281.72" fill="none" stroke="#00c000" stroke-width="1.4" stroke-linejoin="round" stroke-linecap="butt" /><path d="M116.78 372.32 L116.78 390.44" fill="none" stroke="#00c000" stroke-width="1.4" stroke-linejoin="round" stroke-linecap="butt" /><path d="M98.65 281.72 L134.91 281.72" fill="none" stroke="#00c000" stroke-width="1.4" stroke-linejoin="round" stroke-linecap="butt" /><path d="M80.52 299.84 L153.04 299.84" fill="none" stroke="#00c000" stroke-width="1.4" stroke-linejoin="round" stroke-linecap="butt" /><path d="M98.65 317.96 L134.91 317.96" fill="none" stroke="#00c000" stroke-width="1.4" stroke-linejoin="round" stroke-linecap="butt" /><path d="M80.52 336.08 L153.04 336.08" fill="none" stroke="#00c000" stroke-width="1.4" stroke-linejoin="round" stroke-linecap="butt" /><path d="M98.65 354.2 L134.91 354.2" fill="none" stroke="#00c000" stroke-width="1.4" stroke-linejoin="round" stroke-linecap="butt" /><path d="M80.52 372.32 L153.04 372.32" fill="none" stroke="#00c000" stroke-width="1.4" stroke-linejoin="round" stroke-linecap="butt" /><path d="M298.08 263.6 L406.86 263.6" fill="none" stroke="#00c000" stroke-width="1.4" stroke-linejoin="round" stroke-linecap="butt" /><path d="M298.08 209.24 L352.47 263.6 L406.86 209.24" fill="none" stroke="#00c000" stroke-width="1.4" stroke-linejoin="round" stroke-linecap="butt" /><path d="M406.86 209.24 L388.73 218.3 L397.79 227.36 L406.86 209.24" fill="none" stroke="#00c000" stroke-width="1.4" stroke-linejoin="round" stroke-linecap="butt" /><path d="M352.47 299.84 L352.47 327.02 L370.6 336.08 L334.34 354.2 L370.6 372.32 L334.34 390.44 L370.6 408.56 L334.34 426.68 L352.47 435.74 L352.47 462.92" fill="none" stroke="#f0b000" stroke-width="1.5" stroke-linejoin="round" stroke-linecap="butt" /><path d="M588.16 299.84 L588.16 336.08" fill="none" stroke="#00c000" stroke-width="1.4" stroke-linejoin="round" stroke-linecap="butt" /><path d="M588.16 354.2 L588.16 390.44" fill="none" stroke="#00c000" stroke-width="1.4" stroke-linejoin="round" stroke-linecap="butt" /><circle cx="588.16" cy="345.14" r="36" fill="none" stroke="#00c000" stroke-width="1.4"/><path d="M570.03 336.08 L606.29 336.08 L588.16 354.2 L570.03 336.08" fill="none" stroke="#00c000" stroke-width="1.4" stroke-linejoin="round" stroke-linecap="butt" /><path d="M570.03 354.2 L606.29 354.2" fill="none" stroke="#00c000" stroke-width="1.4" stroke-linejoin="round" stroke-linecap="butt" /><path d="M627.2 351.5 L646 369.5 L637 370.5 L655.5 388.7" fill="none" stroke="#00c000" stroke-width="1.4" stroke-linejoin="round" stroke-linecap="butt" /><path d="M643 357 L661.5 375.5 L653 377 L671 394" fill="none" stroke="#00c000" stroke-width="1.4" stroke-linejoin="round" stroke-linecap="butt" /><circle cx="352.7" cy="463.4" r="5.5" fill="#ff0000"/><path d="M38.3 372.5 L62 372.5 M38.3 372.5 L38.3 362 Q38.3 356.5 43.9 356.5 Q49.5 356.5 49.5 362 L49.5 372.5 M49.5 362 Q49.5 355 55.8 355 Q62 355 62 362 L62 372.5" fill="none" stroke="#c8c800" stroke-width="1.25" stroke-linejoin="round" stroke-linecap="round"/><path d="M38.3 342.5 L62 342.5 M38.3 342.5 L43.3 345.4" fill="none" stroke="#c8c800" stroke-width="1.25" stroke-linejoin="round" stroke-linecap="round"/><ellipse cx="341.2" cy="181.3" rx="12.0" ry="10.3" fill="none" stroke="#c8c800" stroke-width="1.25"/><path d="M347.1 178.7 L352.5 171.7" fill="none" stroke="#c8c800" stroke-width="1.25" stroke-linejoin="round" stroke-linecap="round"/><path d="M329.2 158.75 L352.5 158.75 M329.2 158.75 L333.75 161.25" fill="none" stroke="#c8c800" stroke-width="1.25" stroke-linejoin="round" stroke-linecap="round"/><path d="M276.3 217 Q274.5 221 275 223 Q277 227.7 282 227.7 Q287 227.7 289 223 Q289.5 220 287.3 216.3" fill="none" stroke="#c8c800" stroke-width="1.25" stroke-linejoin="round" stroke-linecap="round"/><path d="M419.6 227.5 L434.4 227.5 M419.9 217 L419.9 227.5 M427 219.5 L427 227.5 M434.2 217 L434.2 227.5" fill="none" stroke="#c8c800" stroke-width="1.25" stroke-linejoin="round" stroke-linecap="round"/><path d="M329.3 282 L343.7 282 M329.3 282 L329.3 276 Q329.3 272.3 332.5 272.3 Q335.8 272.3 335.8 276 L335.8 282 M335.8 276 Q335.8 271.3 339.7 271.3 Q343.7 271.3 343.7 276 L343.7 282" fill="none" stroke="#c8c800" stroke-width="1.25" stroke-linejoin="round" stroke-linecap="round"/><path d="M292.5 426.25 L315.8 426.25 M292.5 426.25 L292.5 415 L296 411.5 L300.5 411.5 L303.3 415 L303.3 426.25 M303.3 419 L315.4 410" fill="none" stroke="#f0b000" stroke-width="1.25" stroke-linejoin="round" stroke-linecap="round"/><path d="M292.5 400.4 L315.8 400.4 M292.5 400.4 L297 402.5" fill="none" stroke="#f0b000" stroke-width="1.25" stroke-linejoin="round" stroke-linecap="round"/><path d="M624.6 408.7 L647.8 408.7 M624.6 408.7 L624.6 423" fill="none" stroke="#c8c800" stroke-width="1.25" stroke-linejoin="round" stroke-linecap="round"/><path d="M624.6 429.4 L647.8 429.4 M624.6 429.4 L624.6 444.4 M637.8 429.4 L637.8 440.5 M647.8 429.4 L647.8 444.4" fill="none" stroke="#c8c800" stroke-width="1.25" stroke-linejoin="round" stroke-linecap="round"/><path d="M624.6 454.8 L647.8 454.8 M624.6 454.8 L624.6 462 Q624.6 473.8 636.2 473.8 Q647.8 473.8 647.8 462 L647.8 454.8" fill="none" stroke="#c8c800" stroke-width="1.25" stroke-linejoin="round" stroke-linecap="round"/><path d="M624.6 481.7 L647.8 481.7 M647.8 481.7 L642.5 478.6" fill="none" stroke="#c8c800" stroke-width="1.25" stroke-linejoin="round" stroke-linecap="round"/><path d="M60.9 371.4 L64.1 374.6 M64.1 371.4 L60.9 374.6" stroke="#707070" stroke-width="0.8" fill="none"/><path d="M351.4 190.4 L354.6 193.6 M354.6 190.4 L351.4 193.6" stroke="#707070" stroke-width="0.8" fill="none"/><path d="M287.9 226.9 L291.1 230.1 M291.1 226.9 L287.9 230.1" stroke="#707070" stroke-width="0.8" fill="none"/><path d="M433.2 226.9 L436.4 230.1 M436.4 226.9 L433.2 230.1" stroke="#707070" stroke-width="0.8" fill="none"/><path d="M342.4 281.4 L345.6 284.6 M345.6 281.4 L342.4 284.6" stroke="#707070" stroke-width="0.8" fill="none"/><path d="M314.4 425.4 L317.6 428.6 M317.6 425.4 L314.4 428.6" stroke="#707070" stroke-width="0.8" fill="none"/><path d="M623 407.1 L626.2 410.3 M626.2 407.1 L623 410.3" stroke="#707070" stroke-width="0.8" fill="none"/></g><rect x="15.5" y="40.5" width="21" height="21" fill="none" stroke="#484846" stroke-width="1" stroke-dasharray="1 1"/><rect x="16.5" y="41.5" width="19" height="19" fill="none" stroke="#e6e5e0" stroke-width="1"/><path d="M19.6 46.6 L27 43.2 L33.8 52.4 L24.4 59.4 L19.6 51.2 Z" fill="#e6e6c8" stroke="#141414" stroke-width="1.05" stroke-linejoin="round"/><path d="M19.8 47 L22.4 49.2 L20.4 50.6 Z" fill="#9aa4ac"/><path d="M45 48.2 L54 45.4 L55.3 45.8 L58.8 47.3 L50.1 57.2 Z" fill="#c4b690" stroke="#141414" stroke-width="0.95" stroke-linejoin="round"/><path d="M46.8 48.9 L56.8 46.7 L50.6 54.5 Z" fill="#fbfbf8"/><path d="M50.7 50.9 L58.8 47.3 L59.4 53 L50.1 57.2 Z" fill="#aa9e80" stroke="#141414" stroke-width="1" stroke-linejoin="round"/><path d="M72.1 48.7 L81.4 44 L86.6 53.4 L77.2 57.6 Z" fill="#4f8598" stroke="#111" stroke-width="1.1" stroke-linejoin="round"/><path d="M73.2 48.9 L80.9 45.5 L82.7 49.6 L75.7 52.8 Z" fill="#eaf4f6"/><path d="M77.7 53.9 L82 52.2 L83.4 55.4 L79.2 57 Z" fill="#e6eef0"/><circle cx="79.6" cy="55" r="0.8" fill="#3a5a66"/><rect x="96" y="42" width="1" height="17" fill="#9a9890"/><rect x="97" y="42" width="1" height="17" fill="#ffffff"/><rect x="159" y="42" width="1" height="17" fill="#9a9890"/><rect x="160" y="42" width="1" height="17" fill="#ffffff"/><rect x="274" y="42" width="1" height="17" fill="#9a9890"/><rect x="275" y="42" width="1" height="17" fill="#ffffff"/><rect x="311" y="42" width="1" height="17" fill="#9a9890"/><rect x="312" y="42" width="1" height="17" fill="#ffffff"/><path d="M110.3 48.2 L113 45.6 L113 46.9 Q120 46.4 119.2 52.3 L116.8 55 Q117.3 50 113 50.2 L113 51 Z" fill="#1e0a04" stroke="#140602" stroke-width="0.4"/><path d="M111.6 48.2 L112.6 47.3 L112.6 49.1 Z M113 48 Q115.5 48 116.5 49.5 Q115 48.7 113 48.8 Z" fill="#c05018"/><path d="M146 48.2 L143.3 45.6 L143.3 46.9 Q136.3 46.4 137.1 52.3 L139.5 55 Q139 50 143.3 50.2 L143.3 51 Z" fill="#081408" stroke="#040a04" stroke-width="0.4"/><path d="M144.7 48.2 L143.7 47.3 L143.7 49.1 Z M143.3 48 Q140.8 48 139.8 49.5 Q141.3 48.7 143.3 48.8 Z" fill="#3a8a3a"/><path d="M169.8 48.9 H174 M169.8 52.2 H174" stroke="#1a1a1a" stroke-width="1.5"/><path d="M181.5 50.4 H186" stroke="#1a1a1a" stroke-width="1.2"/><rect x="174.4" y="47.7" width="6.7" height="5.9" rx="1.8" fill="#e6e4e0" stroke="#128a12" stroke-width="1.9"/><path d="M195.3 45.8 H209 M195.3 48.5 H204.3 V50.5 H209 M195.3 50.6 H200.7 V54.3 H209" stroke="#f6f0b8" stroke-width="1.4" fill="none" transform="translate(0.6,-1.3)"/><path d="M195.3 45.8 H209 M195.3 48.5 H204.3 V50.5 H209 M195.3 50.6 H200.7 V54.3 H209" stroke="#0a0ae6" stroke-width="1.7" fill="none"/><circle cx="210.5" cy="45.8" r="1.7" fill="#f00808"/><circle cx="210.5" cy="50.5" r="1.7" fill="#f00808"/><circle cx="210.5" cy="54.3" r="1.7" fill="#f00808"/><path d="M223.1 58.3 V44 H238.3" stroke="#0a800a" stroke-width="2.1" fill="none"/><path d="M226 49.5 H238 M226 51.9 H238 M226 54.3 H238" stroke="#4a4a48" stroke-width="1" stroke-dasharray="1.6 0.6" fill="none"/><path d="M224.3 46.8 L226.2 49.5 M224.3 49.6 L226.2 51.9 M224.3 52 L226.2 54.3" stroke="#3a3a38" stroke-width="0.9" fill="none"/><path d="M252.2 46 H259.3 V49.3 H258.4 Q258.1 48.4 257.3 48.4 H256.9 V53.2 H258.1 V54.7 H253.5 V53.2 H254.6 V48.4 H254.2 Q253.4 48.4 253.1 49.3 H252.2 Z" fill="#0a8a0a"/><rect x="260.4" y="44.4" width="1.6" height="11.3" fill="#1e1e1e"/><rect x="280" y="38" width="26" height="26" fill="#c6c4bc"/><rect x="280" y="38" width="26" height="1.5" fill="#1a1a1a"/><rect x="280" y="38" width="1.5" height="26" fill="#1a1a1a"/><rect x="280" y="63" width="26" height="1" fill="#ffffff"/><rect x="305" y="38" width="1" height="26" fill="#ffffff"/><path d="M290 45 L290 55 L292.3 52.8 L294.3 56.5 L295.8 55.8 L293.9 52.2 L297 52 Z" fill="#000"/><path d="M709.8 73.2 L712.5 70 L715.2 73.2 Z" fill="#000"/><path d="M709.8 565.6 L715.2 565.6 L712.5 568.9 Z" fill="#000"/><path d="M10 578 L10 584 L7 581 Z" fill="#000"/><path d="M711 578 L711 584 L714 581 Z" fill="#000"/><path d="M696.5 8.3 L701 8.3 M696.5 8.3 L698.7 12" fill="none" stroke="#e0808e" stroke-width="1"/><path d="M701 8.3 L698.7 12" fill="none" stroke="#5a2a34" stroke-width="1.1"/><path d="M710.4 12.5 L712.7 9" fill="none" stroke="#e0808e" stroke-width="1"/><path d="M712.7 9 L715 12.5 L710.4 12.5" fill="none" stroke="#5a2a34" stroke-width="1.1"/></svg>
</body></html>
